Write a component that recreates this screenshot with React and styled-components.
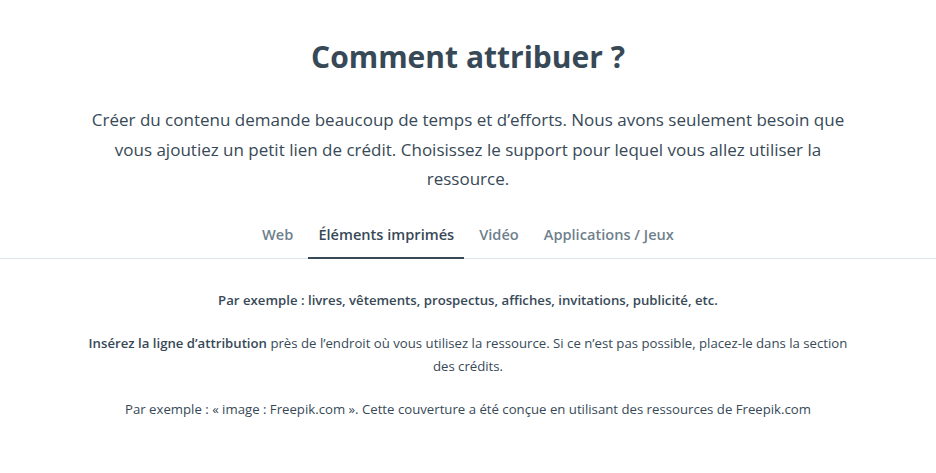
import React, { useState } from 'react';
import styled, { createGlobalStyle } from 'styled-components';

const GlobalStyle = createGlobalStyle`
  body {
    margin: 0;
    background: #fff;
    font-family: "Open Sans", "Liberation Sans", sans-serif;
    color: #374957;
  }
`;

const Page = styled.section`
  padding-top: 36px;
  text-align: center;
`;

const Title = styled.h2`
  margin: 0;
  font-size: 30px;
  line-height: 42px;
  font-weight: 700;
  color: #374957;
`;

const Intro = styled.p`
  max-width: 770px;
  margin: 27px auto 0;
  font-size: 17px;
  line-height: 29.5px;
  color: #374957;
`;

const Tabs = styled.nav`
  display: flex;
  justify-content: center;
  gap: 5px;
  margin-top: 21px;
  border-bottom: 1px solid #dde5ec;
`;

const Tab = styled.button`
  border: none;
  background: none;
  cursor: pointer;
  font-family: inherit;
  font-size: 14.6px;
  font-weight: 600;
  padding: 9px 10px 13px;
  margin-bottom: -1px;
  color: ${props => (props.active ? '#374957' : '#6f7f8c')};
  border-bottom: 2px solid ${props => (props.active ? '#374957' : 'transparent')};
`;

const Body = styled.div`
  max-width: 780px;
  margin: 0 auto;
  padding-top: 30px;
  font-size: 13.2px;
  line-height: 23px;
`;

const Line = styled.p`
  margin: 0 0 20px;
  font-weight: ${props => (props.bold ? 600 : 400)};

  b {
    font-weight: 600;
  }
`;

const tabs = ['Web', 'Éléments imprimés', 'Vidéo', 'Applications / Jeux'];

export default function App() {
  const [current, setCurrent] = useState(1);

  return (
    <Page>
      <GlobalStyle />
      <Title>Comment attribuer ?</Title>
      <Intro>
        Créer du contenu demande beaucoup de temps et d’efforts. Nous avons seulement besoin que
        vous ajoutiez un petit lien de crédit. Choisissez le support pour lequel vous allez utiliser la
        ressource.
      </Intro>

      <Tabs>
        {tabs.map((t, i) => (
          <Tab key={t} active={i === current} onClick={() => setCurrent(i)}>
            {t}
          </Tab>
        ))}
      </Tabs>

      <Body>
        <Line bold>
          Par exemple : livres, vêtements, prospectus, affiches, invitations, publicité, etc.
        </Line>
        <Line>
          <b>Insérez la ligne d’attribution</b> près de l’endroit où vous utilisez la ressource. Si ce
          n’est pas possible, placez-le dans la section des crédits.
        </Line>
        <Line>
          Par exemple : « image : Freepik.com ». Cette couverture a été conçue en utilisant des
          ressources de Freepik.com
        </Line>
      </Body>
    </Page>
  );
}
